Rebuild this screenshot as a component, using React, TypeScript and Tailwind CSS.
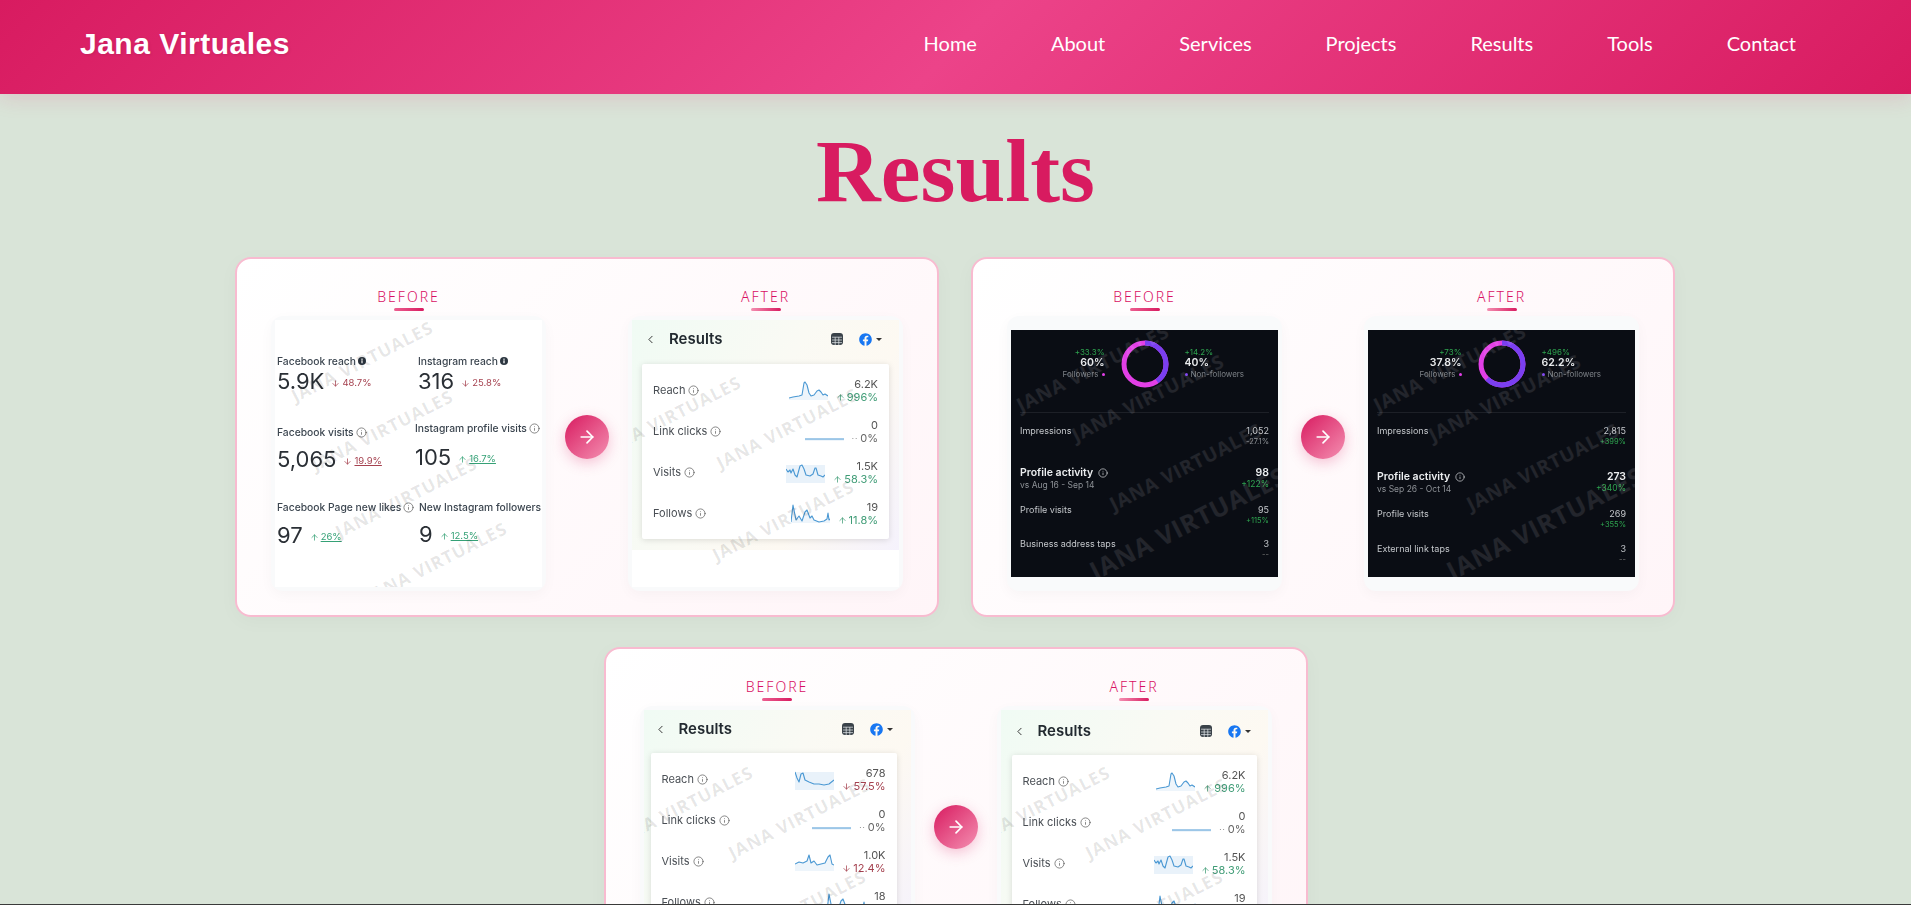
import { ArrowRight, ChevronLeft, Info, ArrowDown, ArrowUp } from "lucide-react";
import { FaFacebook } from "react-icons/fa";

const navLinks = ["Home", "About", "Services", "Projects", "Results", "Tools", "Contact"];

const lightMarks = [
  "left-[38px] top-[96px]",
  "left-[155px] top-[108px]",
  "left-[151px] top-[200px]",
];
const metricMarks = [
  "left-[87px] top-[41px]",
  "left-[107px] top-[110px]",
  "left-[131px] top-[177px]",
  "left-[161px] top-[242px]",
];
const darkMarks = [
  "left-[82px] top-[38px]",
  "left-[137px] top-[68px]",
  "left-[175px] top-[137px]",
];

type Trend = "up" | "down" | "flat";

const Watermarks = ({ marks, dark }: { marks: string[]; dark?: boolean }) => (
  <>
    {marks.map((m) => (
      <span
        key={m}
        className={`absolute ${m} -translate-x-1/2 -translate-y-1/2 rotate-[-27deg] whitespace-nowrap font-['Open_Sans',sans-serif] font-bold tracking-[1px] ${
          dark ? "text-[19px] text-white/10" : "text-[17.5px] text-black/10"
        }`}
      >
        JANA VIRTUALES
      </span>
    ))}
  </>
);

const Metric = ({
  label,
  value,
  delta,
  trend,
  filled,
  className,
  valueClass,
}: {
  label: string;
  value: string;
  delta: string;
  trend: Trend;
  filled?: boolean;
  className?: string;
  valueClass?: string;
}) => (
  <div className={className}>
    <div className="flex items-center gap-[2px] whitespace-nowrap text-[10.3px] font-medium leading-[14px] text-[#3c4650]">
      {label}
      {filled ? (
        <svg viewBox="0 0 10 10" className="h-[8px] w-[8px]">
          <circle cx="5" cy="5" r="5" fill="#2c3640" />
          <rect x="4.2" y="4.2" width="1.6" height="3.6" fill="#fff" />
          <rect x="4.2" y="2" width="1.6" height="1.5" fill="#fff" />
        </svg>
      ) : (
        label !== "New Instagram followers" && <Info className="h-[11px] w-[11px] text-[#555]" strokeWidth={1.5} />
      )}
    </div>
    <div className={`flex items-center ${valueClass ?? ""}`}>
      <span className="text-[22px] leading-[26px] text-[#2a2f35]">{value}</span>
      <span className={`ml-[7px] mt-[5px] flex items-center gap-[2px] text-[9.5px] ${trend === "up" ? "text-[#35a176]" : "text-[#a5414f]"}`}>
        {trend === "up" ? <ArrowUp className="h-[9px] w-[9px]" /> : <ArrowDown className="h-[9px] w-[9px]" />}
        <span className={filled ? "" : "underline decoration-[0.5px]"}>{delta}</span>
      </span>
    </div>
  </div>
);

const MetricsImage = () => (
  <div className="relative h-[267px] overflow-hidden bg-white font-['Inter',sans-serif]">
    <div className="grid grid-cols-[140px_1fr] pl-[2px] pt-[34px] blur-[0.4px]">
      <Metric label="Facebook reach" value="5.9K" delta="48.7%" trend="down" filled />
      <Metric label="Instagram reach" value="316" delta="25.8%" trend="down" filled className="ml-[1px]" />
      <Metric label="Facebook visits" value="5,065" delta="19.9%" trend="down" className="mt-[31px]" valueClass="mt-[7px]" />
      <Metric label="Instagram profile visits" value="105" delta="16.7%" trend="up" className="-ml-[2px] mt-[27px]" valueClass="mt-[9px]" />
      <Metric label="Facebook Page new likes" value="97" delta="26%" trend="up" className="mt-[28px]" valueClass="mt-[8px]" />
      <Metric label="New Instagram followers" value="9" delta="12.5%" trend="up" className="ml-[2px] mt-[28px]" valueClass="mt-[7px]" />
    </div>
    <Watermarks marks={metricMarks} />
  </div>
);

const Spark = ({ points, fillTop }: { points: string; fillTop?: boolean }) => (
  <svg viewBox="0 0 39 20" className="h-[20px] w-[39px]">
    {fillTop ? (
      <rect x="0" y="2" width="39" height="18" fill="#e9f2fa" />
    ) : (
      <polygon points={`0,19 ${points} 39,19`} fill="#eef5fb" />
    )}
    <polyline points={points} fill="none" stroke="#4a98d3" strokeWidth="1.1" strokeLinejoin="round" />
  </svg>
);

const sparks = {
  reachUp: "0,17 4,16 10,15 13,14 15,2 16,1 18,4 20,12 22,15 25,14 28,10 30,9 32,11 34,14 36,13 39,15",
  reachDown: "0,2 2,8 4,12 6,4 8,3 10,10 14,12 19,14 24,14 29,15 34,14 39,10",
  flat: "0,17 39,17",
  visitsUp: "0,6 2,9 4,7 5,10 7,6 9,12 11,14 14,3 16,2 18,6 20,12 24,13 27,11 29,5 30,5 32,12 35,13 37,14 39,12",
  visitsDown: "0,12 4,10 8,11 12,9 14,3 16,11 19,9 22,13 26,12 30,11 33,5 35,3 37,12 39,13",
  follows: "0,18 2,1 5,16 8,12 11,17 14,8 16,6 19,14 21,12 23,16 28,18 33,17 36,15 37,9 38,16 39,15",
};

const ResultRow = ({
  label,
  spark,
  fillTop,
  value,
  delta,
  trend,
}: {
  label: string;
  spark: string;
  fillTop?: boolean;
  value: string;
  delta: string;
  trend: Trend;
}) => (
  <div className="flex h-[41px] items-center">
    <span className="text-[11px] text-[#4a4f55]">{label}</span>
    <Info className="ml-[3px] h-[11px] w-[11px] text-[#555]" strokeWidth={1.5} />
    <div className="ml-auto mr-[8px]">
      <Spark points={spark} fillTop={fillTop} />
    </div>
    <div className="flex flex-col items-end text-[11px] leading-[13px]">
      <span className="text-[#555]">{value}</span>
      <span
        className={`flex items-center gap-[2px] ${
          trend === "up" ? "text-[#3f9c76]" : trend === "down" ? "text-[#a5414f]" : "text-[#666]"
        }`}
      >
        {trend === "up" && <ArrowUp className="h-[9px] w-[9px]" />}
        {trend === "down" && <ArrowDown className="h-[9px] w-[9px]" />}
        {trend === "flat" && <span className="text-[8px] tracking-[1px]">··</span>}
        {delta}
      </span>
    </div>
  </div>
);

const CalendarIcon = () => (
  <svg viewBox="0 0 12 12" className="h-[12px] w-[12px]">
    <rect width="12" height="12" rx="3" fill="#3a4249" />
    <path d="M1 4.2h10M1 7h10M1 9.6h10M4.2 4.2V12M7.8 4.2V12" stroke="#e8ecef" strokeWidth="0.7" />
  </svg>
);

const ResultsImage = ({
  rows,
  head,
  inset,
}: {
  rows: { label: string; spark: string; fillTop?: boolean; value: string; delta: string; trend: Trend }[];
  head: string;
  inset: string;
}) => (
  <div className="relative h-[267px] overflow-hidden bg-white font-['Inter',sans-serif]">
    <div className="h-[230px] bg-[linear-gradient(120deg,#f0fbf4_0%,#fafaf4_45%,#fdf9f2_70%,#f5f2fc_100%)] blur-[0.3px]">
      <div className={`flex items-center ${head}`}>
        <ChevronLeft className="h-[13px] w-[13px] text-[#333]" strokeWidth={1.8} />
        <span className="ml-[12px] text-[15px] font-semibold text-[#222a30]">Results</span>
        <div className="ml-auto">
          <CalendarIcon />
        </div>
        <FaFacebook className="ml-[16px] h-[13px] w-[13px] text-[#1877f2]" />
        <div className="ml-[4px] h-0 w-0 border-x-[3px] border-t-[3.5px] border-x-transparent border-t-[#333]" />
      </div>
      <div className={inset}>
        <div className="rounded-[2px] bg-white px-[11px] pb-[5px] pt-[6px] shadow-[0_1px_6px_rgba(0,0,0,0.13)]">
          {rows.map((r) => (
            <ResultRow key={r.label} {...r} />
          ))}
        </div>
      </div>
    </div>
    <Watermarks marks={lightMarks} />
  </div>
);

const Donut = ({ purple }: { purple: number }) => {
  const c = 2 * Math.PI * 21;
  return (
    <svg viewBox="0 0 48 48" className="h-[48px] w-[48px] -rotate-90">
      <circle cx="24" cy="24" r="21" fill="none" stroke="#e23fe6" strokeWidth="5" />
      <circle
        cx="24"
        cy="24"
        r="21"
        fill="none"
        stroke="#7a3ff0"
        strokeWidth="5"
        strokeDasharray={`${(purple / 100) * c} ${c}`}
      />
    </svg>
  );
};

const DarkRow = ({
  label,
  value,
  delta,
  deltaClass,
  className,
  sub,
  big,
}: {
  label: string;
  value: string;
  delta: string;
  deltaClass: string;
  className: string;
  sub?: string;
  big?: boolean;
}) => (
  <div className={`flex justify-between ${className}`}>
    <div>
      <div className={`flex items-center gap-[5px] leading-[12px] ${big ? "text-[10.5px] font-semibold text-[#eceef0]" : "text-[9px] text-[#c4c7cb]"}`}>
        {label}
        {big && <Info className="h-[10px] w-[10px]" strokeWidth={1.5} />}
      </div>
      {sub && <div className="text-[8.5px] leading-[12px] text-[#8d9196]">{sub}</div>}
    </div>
    <div className="text-right">
      <div className={`leading-[12px] ${big ? "text-[10.5px] font-semibold text-[#eceef0]" : "text-[9px] text-[#c4c7cb]"}`}>{value}</div>
      <div className={`${big ? "text-[8.5px]" : "text-[7.5px]"} leading-[10px] ${deltaClass}`}>{delta}</div>
    </div>
  </div>
);

const DarkImage = ({
  f,
  n,
  fd,
  nd,
  imp,
  impD,
  impClass,
  period,
  act,
  actD,
  visits,
  visitsD,
  lastLabel,
  gapA,
  gapB,
  gapC,
}: {
  f: string;
  n: string;
  fd: string;
  nd: string;
  imp: string;
  impD: string;
  impClass: string;
  period: string;
  act: string;
  actD: string;
  visits: string;
  visitsD: string;
  lastLabel: string;
  gapA: string;
  gapB: string;
  gapC: string;
}) => (
  <div className="flex h-[267px] items-center">
    <div className="relative h-[247px] w-full overflow-hidden bg-[#0a0d14] font-['Inter',sans-serif]">
      <div className="blur-[0.3px]">
        <div className="flex h-[82px] justify-center gap-[16px] pt-[10px]">
          <div className="flex w-[70px] flex-col items-end pt-[7px] text-right">
            <span className="text-[8px] leading-[10px] text-[#2ea44f]">{fd}</span>
            <span className="text-[10.5px] font-semibold leading-[12px] text-[#e8eaec]">{f}</span>
            <span className="flex items-center gap-[3px] text-[8px] leading-[10px] text-[#7c8086]">
              Followers <i className="h-[3px] w-[3px] rounded-full bg-[#e23fe6]" />
            </span>
          </div>
          <Donut purple={parseFloat(n)} />
          <div className="flex w-[70px] flex-col items-start pt-[7px]">
            <span className="text-[8px] leading-[10px] text-[#2ea44f]">{nd}</span>
            <span className="text-[10.5px] font-semibold leading-[12px] text-[#e8eaec]">{n}</span>
            <span className="flex items-center gap-[3px] whitespace-nowrap text-[8px] leading-[10px] text-[#7c8086]">
              <i className="h-[3px] w-[3px] rounded-full bg-[#7a3ff0]" /> Non-followers
            </span>
          </div>
        </div>
        <div className="mx-[9px] border-t border-[#1d2027]" />
        <div className="px-[9px]">
          <DarkRow label="Impressions" value={imp} delta={impD} deltaClass={impClass} className="mt-[12px]" />
          <DarkRow label="Profile activity" sub={period} value={act} delta={actD} deltaClass="text-[#2ea44f]" big className={gapA} />
          <DarkRow label="Profile visits" value={visits} delta={visitsD} deltaClass="text-[#2ea44f]" className={gapB} />
          <DarkRow label={lastLabel} value="3" delta="--" deltaClass="text-[#777]" className={gapC} />
        </div>
      </div>
      <Watermarks marks={darkMarks} dark />
      <span className="absolute left-[177px] top-[193px] -translate-x-1/2 -translate-y-1/2 rotate-[-27deg] whitespace-nowrap font-['Open_Sans',sans-serif] text-[25px] font-bold tracking-[1px] text-white/10">
        JANA VIRTUALES
      </span>
    </div>
  </div>
);

const Side = ({ label, rev, children }: { label: string; rev?: boolean; children: React.ReactNode }) => (
  <div className="flex w-[275px] flex-col items-center">
    <div className="font-['Noto_Sans',sans-serif] text-[14px] font-light leading-[20px] tracking-[2px] text-[#d80f62]">{label}</div>
    <div
      className={`mb-[5px] mt-[1px] h-[3px] w-[30px] rounded-[2px] ${
        rev ? "bg-[linear-gradient(90deg,#f48fb1,#d81b60)]" : "bg-[linear-gradient(90deg,#ec5f90,#d81b60)]"
      }`}
    />
    <div className="w-full rounded-[12px] bg-[#f9fafb] p-[4px] shadow-[0_4px_14px_rgba(0,0,0,0.03)]">{children}</div>
  </div>
);

const CompareCard = ({
  before,
  after,
  className,
}: {
  before: React.ReactNode;
  after: React.ReactNode;
  className?: string;
}) => (
  <div
    className={`flex h-[360px] w-[704px] items-start justify-between rounded-[16px] border-2 border-[#f8bbd0] bg-[linear-gradient(135deg,#ffffff,#fff5f8)] px-[34px] pt-[28px] shadow-[0_4px_20px_rgba(0,0,0,0.03)] ${className ?? ""}`}
  >
    <Side label="BEFORE">{before}</Side>
    <div className="mt-[128px] flex h-[44px] w-[44px] items-center justify-center rounded-full bg-[linear-gradient(135deg,#d81b60,#f48fb1)] shadow-[0_4px_14px_rgba(216,27,96,0.25)]">
      <ArrowRight className="h-[20px] w-[20px] text-white" strokeWidth={2} />
    </div>
    <Side label="AFTER" rev>
      {after}
    </Side>
  </div>
);

const afterRows = [
  { label: "Reach", spark: sparks.reachUp, value: "6.2K", delta: "996%", trend: "up" as Trend },
  { label: "Link clicks", spark: sparks.flat, value: "0", delta: "0%", trend: "flat" as Trend },
  { label: "Visits", spark: sparks.visitsUp, fillTop: true, value: "1.5K", delta: "58.3%", trend: "up" as Trend },
  { label: "Follows", spark: sparks.follows, value: "19", delta: "11.8%", trend: "up" as Trend },
];

const beforeRows = [
  { label: "Reach", spark: sparks.reachDown, fillTop: true, value: "678", delta: "57.5%", trend: "down" as Trend },
  { label: "Link clicks", spark: sparks.flat, value: "0", delta: "0%", trend: "flat" as Trend },
  { label: "Visits", spark: sparks.visitsDown, value: "1.0K", delta: "12.4%", trend: "down" as Trend },
  { label: "Follows", spark: sparks.follows, value: "18", delta: "", trend: "flat" as Trend },
];

const App = () => {
  return (
    <div className="relative h-screen overflow-hidden bg-[#d9e4d8]">
      <header className="relative z-10 flex h-[94px] items-center justify-between bg-[linear-gradient(135deg,#d81b60,#ec4389_50%,#d81b60)] pb-[7px] pl-[80px] pr-[115px] shadow-[0_4px_20px_rgba(216,27,96,0.15)]">
        <div className="font-['Liberation_Sans',sans-serif] text-[30px] font-bold tracking-[0.5px] text-white [text-shadow:1px_1px_3px_rgba(0,0,0,0.1)]">
          Jana Virtuales
        </div>
        <nav className="flex -translate-y-px gap-[74px] font-['Lato',sans-serif] text-[20px] text-white">
          {navLinks.map((link) => (
            <a key={link} href="#">
              {link}
            </a>
          ))}
        </nav>
      </header>

      <h1 className="mb-[37px] mt-[27px] text-center font-['Liberation_Serif',serif] text-[89.6px] font-bold leading-[99px] text-[#d81b60]">
        Results
      </h1>

      <div className="ml-[235px] flex w-[1440px] flex-wrap justify-center gap-x-[32px] gap-y-[30px]">
        <CompareCard
          before={<MetricsImage />}
          after={<ResultsImage rows={afterRows} head="h-[44px] pb-[6px] pl-[12px] pr-[17px]" inset="px-[10px]" />}
        />
        <CompareCard
          before={
            <DarkImage
              f="60%"
              n="40%"
              fd="+33.3%"
              nd="+14.2%"
              imp="1,052"
              impD="-27.1%"
              impClass="text-[#8d9196]"
              period="vs Aug 16 - Sep 14"
              act="98"
              actD="+122%"
              visits="95"
              visitsD="+115%"
              lastLabel="Business address taps"
              gapA="mt-[20px]"
              gapB="mt-[13px]"
              gapC="mt-[12px]"
            />
          }
          after={
            <DarkImage
              f="37.8%"
              n="62.2%"
              fd="+73%"
              nd="+496%"
              imp="2,815"
              impD="+399%"
              impClass="text-[#2ea44f]"
              period="vs Sep 26 - Oct 14"
              act="273"
              actD="+340%"
              visits="269"
              visitsD="+355%"
              lastLabel="External link taps"
              gapA="mt-[24px]"
              gapB="mt-[13px]"
              gapC="mt-[13px]"
            />
          }
        />
        <CompareCard
          className="ml-[1px]"
          before={<ResultsImage rows={beforeRows} head="h-[43px] pb-[5px] pl-[10px] pr-[18px]" inset="pl-[7px] pr-[14px]" />}
          after={<ResultsImage rows={afterRows} head="h-[45px] pb-[3px] pl-[12px] pr-[17px]" inset="pl-[11px] pr-[11px]" />}
        />
      </div>

      <div className="fixed inset-x-0 bottom-0 h-px bg-[#3a3a3a]" />
    </div>
  );
};

export default App;
